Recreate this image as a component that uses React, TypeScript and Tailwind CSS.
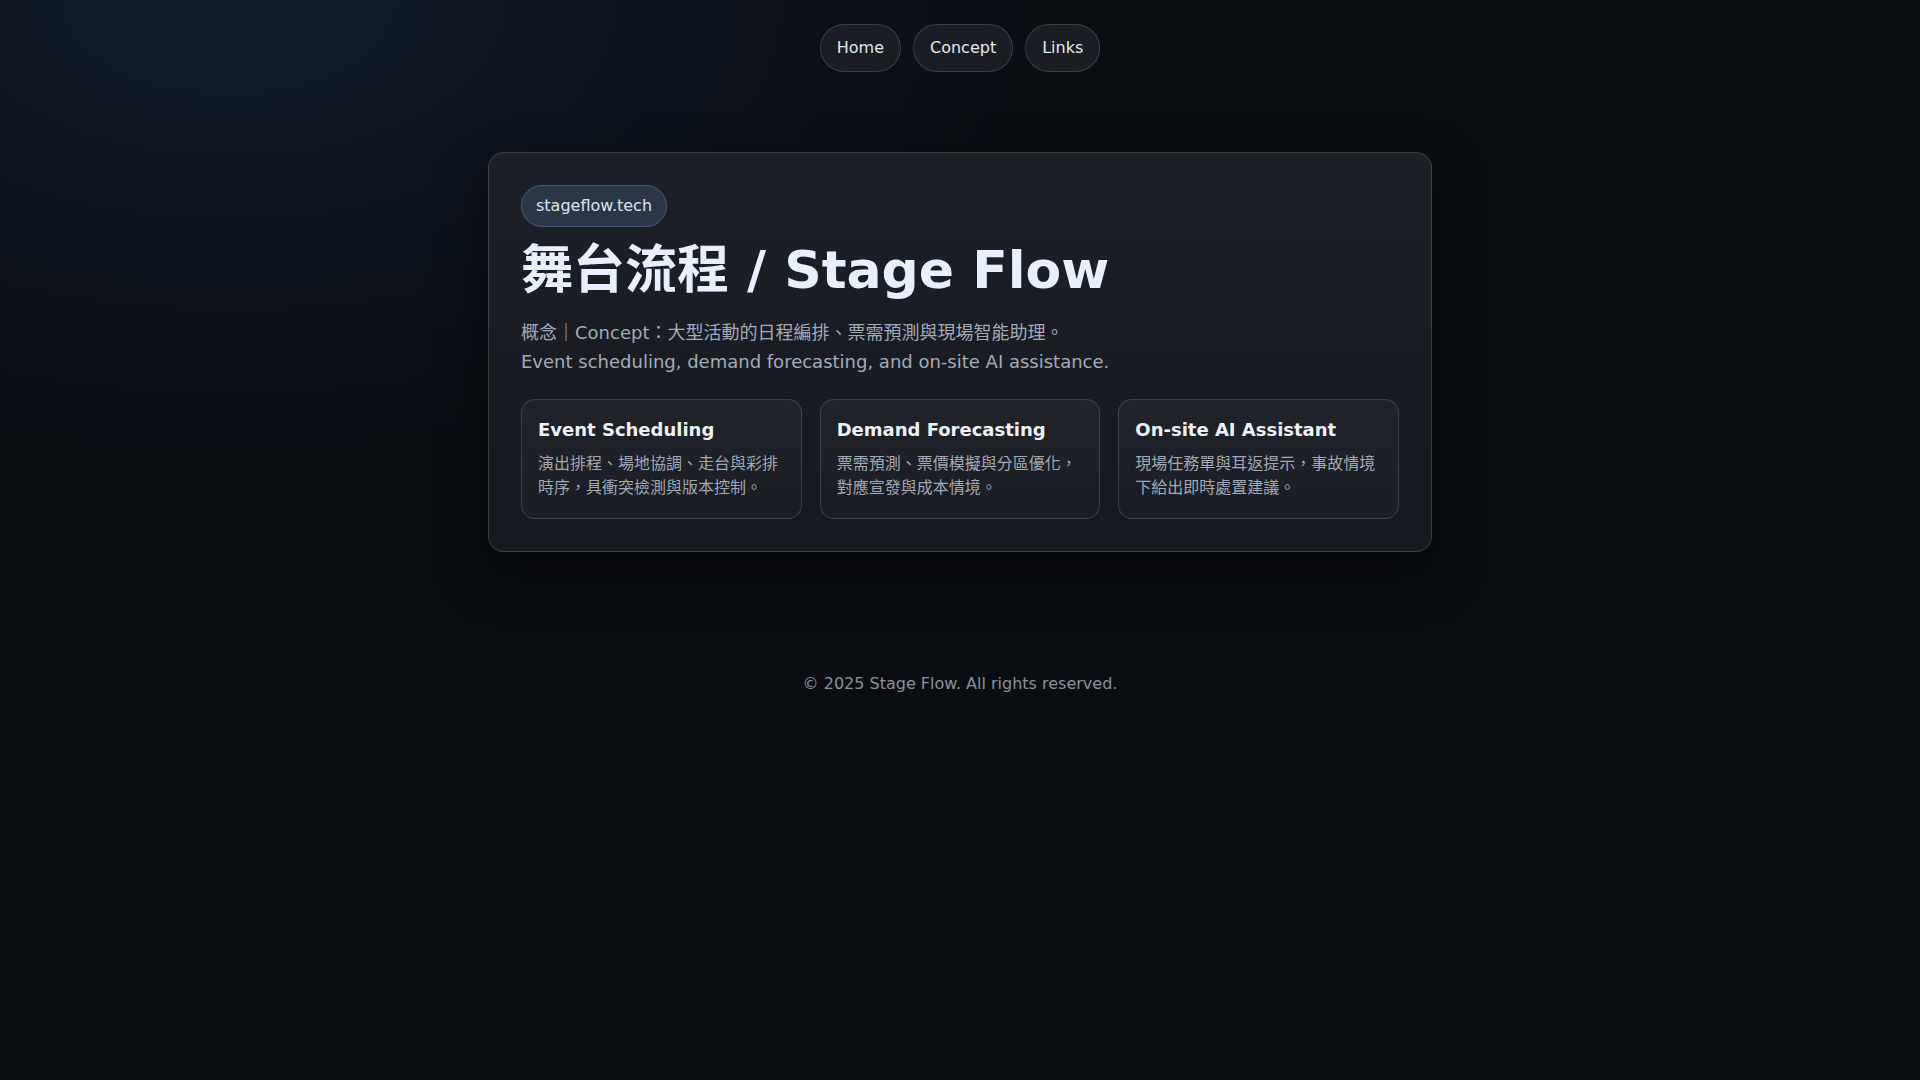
export default function App() {
  const nav = ["Home", "Concept", "Links"];
  const features = [
    {
      title: "Event Scheduling",
      desc: "演出排程、場地協調、走台與彩排時序，具衝突檢測與版本控制。",
    },
    {
      title: "Demand Forecasting",
      desc: "票需預測、票價模擬與分區優化，對應宣發與成本情境。",
    },
    {
      title: "On-site AI Assistant",
      desc: "現場任務單與耳返提示，事故情境下給出即時處置建議。",
    },
  ];

  return (
    <div
      lang="zh-Hant-TW"
      className="min-h-screen bg-[#0a0d12] bg-[radial-gradient(1100px_620px_at_12%_0%,#111c2d_0%,#0d131d_40%,transparent_75%)] text-[#e5e9f0]"
      style={{ fontFamily: '"DejaVu Sans", "Noto Sans CJK TC", sans-serif' }}
    >
      {/* Top nav */}
      <nav className="flex justify-center gap-3 pt-6">
        {nav.map((item) => (
          <a
            key={item}
            href="#"
            className="rounded-full border border-white/15 bg-[#1a1d23] px-4 py-[11px] text-base leading-6 text-[#e3e8f0]"
          >
            {item}
          </a>
        ))}
      </nav>

      {/* Hero card */}
      <main className="mx-auto mt-[80px] w-[944px]">
        <section className="rounded-2xl border border-white/15 bg-[linear-gradient(180deg,#1d2027_0%,#15181e_100%)] p-8 shadow-[0_20px_50px_rgba(0,0,0,0.55)]">
          <span className="inline-block rounded-full border border-[#475876] bg-[#2b3649] px-[14px] py-2 text-base leading-6 text-[#dde6f3]">
            stageflow.tech
          </span>
          <h1 className="mt-3 text-[52px] font-bold leading-[1.2] text-[#e8f0fd]">
            舞台流程 / Stage Flow
          </h1>
          <p className="mt-[18px] text-lg leading-[1.6] text-[#a3abb9]">
            概念｜Concept：大型活動的日程編排、票需預測與現場智能助理。
            <br />
            Event scheduling, demand forecasting, and on-site AI assistance.
          </p>

          <div className="mt-[22px] grid grid-cols-3 gap-[18px]">
            {features.map((f) => (
              <div
                key={f.title}
                className="rounded-[14px] border border-white/15 bg-[linear-gradient(180deg,#202329_0%,#1a1d23_100%)] px-4 pt-4 pb-[18px]"
              >
                <h3 className="text-lg font-bold leading-[27px] text-[#eef2f8]">{f.title}</h3>
                <p className="mt-[9px] text-base leading-6 text-[#a2a9b5]">{f.desc}</p>
              </div>
            ))}
          </div>
        </section>
      </main>

      <footer className="mt-[120px] text-center text-base leading-6 text-[#8a919d]">
        © 2025 Stage Flow. All rights reserved.
      </footer>
    </div>
  );
}
